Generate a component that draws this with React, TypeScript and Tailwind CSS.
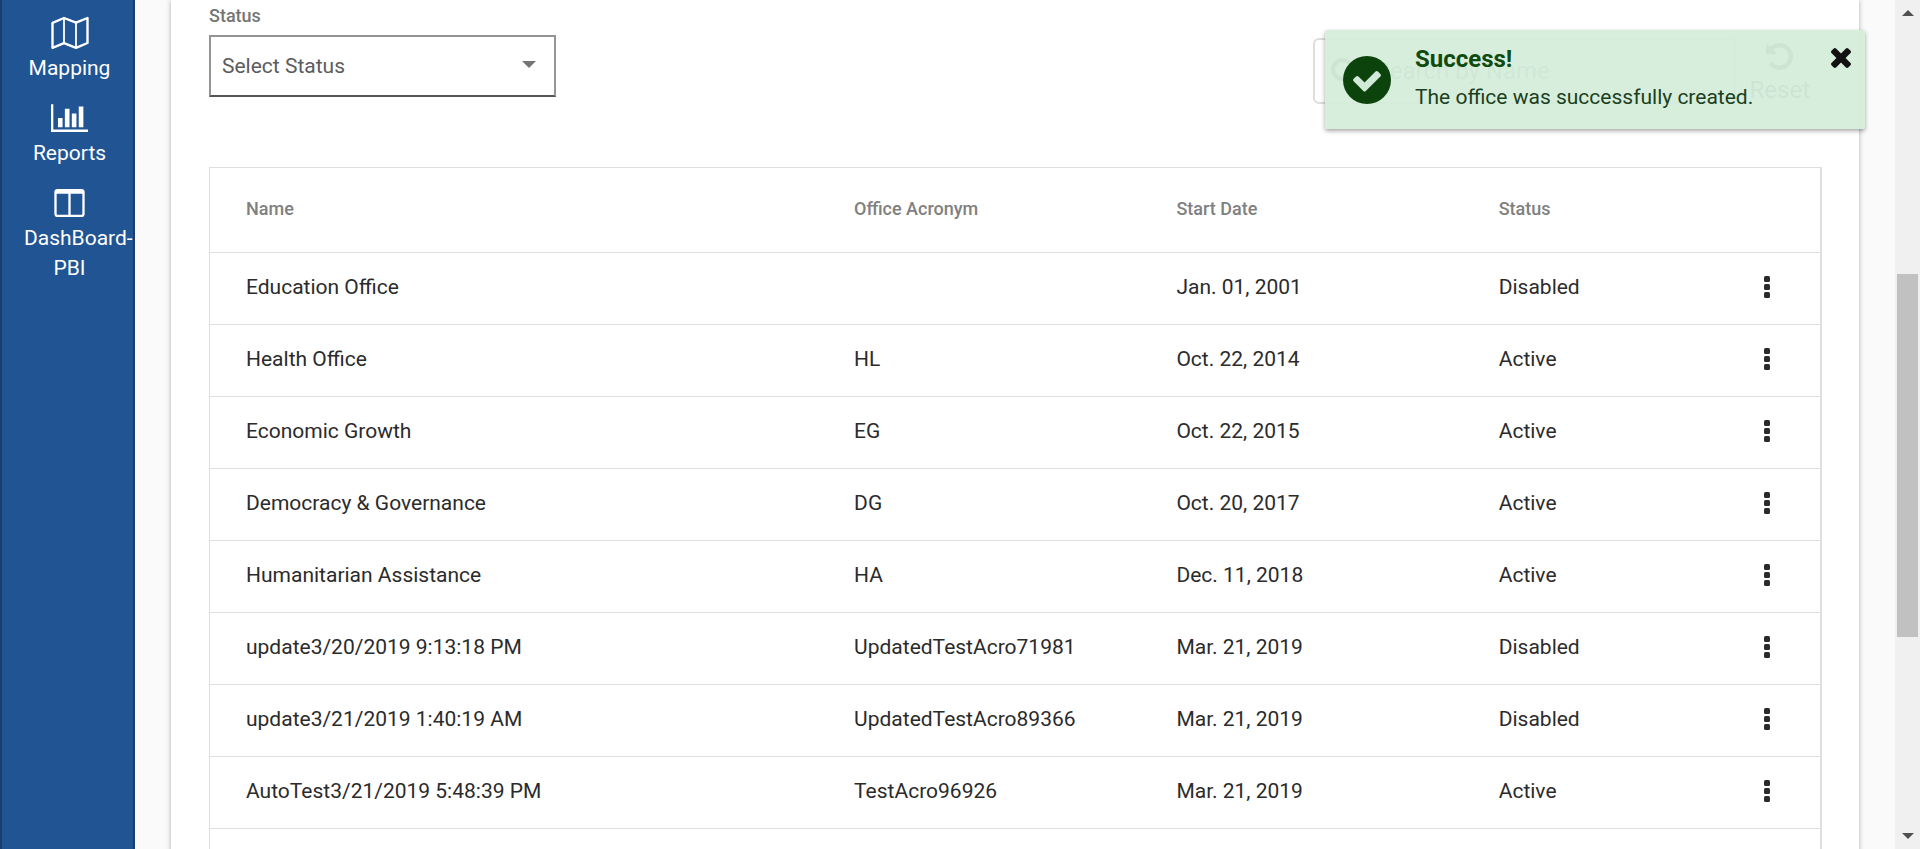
import React from "react";

type Office = { name: string; acronym: string; start: string; status: string };

const offices: Office[] = [
  { name: "Education Office", acronym: "", start: "Jan. 01, 2001", status: "Disabled" },
  { name: "Health Office", acronym: "HL", start: "Oct. 22, 2014", status: "Active" },
  { name: "Economic Growth", acronym: "EG", start: "Oct. 22, 2015", status: "Active" },
  { name: "Democracy & Governance", acronym: "DG", start: "Oct. 20, 2017", status: "Active" },
  { name: "Humanitarian Assistance", acronym: "HA", start: "Dec. 11, 2018", status: "Active" },
  { name: "update3/20/2019 9:13:18 PM", acronym: "UpdatedTestAcro71981", start: "Mar. 21, 2019", status: "Disabled" },
  { name: "update3/21/2019 1:40:19 AM", acronym: "UpdatedTestAcro89366", start: "Mar. 21, 2019", status: "Disabled" },
  { name: "AutoTest3/21/2019 5:48:39 PM", acronym: "TestAcro96926", start: "Mar. 21, 2019", status: "Active" },
];

function MapIcon() {
  return (
    <svg viewBox="0 0 38 34" className="h-[34px] w-[38px]" fill="none" stroke="currentColor" strokeLinejoin="round" aria-hidden="true">
      <path strokeWidth="2.4" d="M1.5 6.8 13 2l12 4.6L36.500 2v25L25 31.800 13 27.200 1.500 31.800z" />
      <path strokeWidth="1.8" d="M13 2v25.200M25 6.600v25.200" />
    </svg>
  );
}

function ChartIcon() {
  return (
    <svg viewBox="0 128 2048 1536" className="h-[28px] w-[37px]" fill="currentColor" aria-hidden="true">
      <path d="M640 896v512h-256v-512zm384-512v1024h-256v-1024zm1024 1152v128h-2048v-1536h128v1408h1920zm-640-896v768h-256v-768zm384-384v1152h-256v-1152z" />
    </svg>
  );
}

function ColumnsIcon() {
  return (
    <svg viewBox="0 128 1664 1536" className="h-[28px] w-[31px]" fill="currentColor" aria-hidden="true">
      <path d="M160 1536h608v-1152h-640v1120q0 13 9.500 22.500t22.500 9.500zm1376-32v-1120h-640v1152h608q13 0 22.500-9.500t9.500-22.500zm128-1216v1216q0 66-47 113t-113 47h-1344q-66 0-113-47t-47-113v-1216q0-66 47-113t113-47h1344q66 0 113 47t47 113z" />
    </svg>
  );
}

function SearchIcon() {
  return (
    <svg viewBox="64 128 1664 1664" className="h-[27px] w-[27px] shrink-0" fill="currentColor" aria-hidden="true">
      <path d="M1216 832q0-185-131.500-316.500t-316.500-131.500-316.500 131.500-131.500 316.500 131.500 316.500 316.500 131.500 316.500-131.500 131.500-316.500zm512 832q0 52-38 90t-90 38q-54 0-90-38l-343-342q-179 124-399 124-143 0-273.500-55.500t-225-150-150-225-55.500-273.500 55.500-273.500 150-225 225-150 273.500-55.500 273.500 55.500 225 150 150 225 55.500 273.500q0 220-124 399l343 343q37 37 37 90z" />
    </svg>
  );
}

function UndoIcon() {
  return (
    <svg viewBox="128 128 1536 1536" className="h-[27px] w-[27px]" fill="currentColor" aria-hidden="true">
      <path d="M1664 896q0 156-61 298t-164 245-245 164-298 61q-172 0-327-72.500t-264-204.500q-7-10-6.500-22.500t8.500-20.500l137-138q10-9 25-9 16 2 23 12 73 95 179 147t225 52q104 0 198.500-40.500t163.500-109.500 109.500-163.500 40.500-198.500-40.500-198.500-109.500-163.500-163.500-109.500-198.500-40.500q-98 0-188 35.500t-160 101.500l137 138q31 30 14 69-17 40-59 40h-448q-26 0-45-19t-19-45v-448q0-42 40-59 39-17 69 14l130 129q107-101 244.500-156.500t284.500-55.500q156 0 298 61t245 164 164 245 61 298z" />
    </svg>
  );
}

function CheckCircleIcon() {
  return (
    <svg viewBox="128 128 1536 1536" className="h-12 w-12 shrink-0" aria-hidden="true">
      <circle cx="896" cy="896" r="768" fill="currentColor" />
      <g transform="translate(896 917) scale(0.86) translate(-896 -937)" fill="#d2ead8">
        <path d="M1412 734q0-28-18-46l-91-90q-19-19-45-19t-45 19l-408 407-226-226q-19-19-45-19t-45 19l-91 90q-18 18-18 46 0 27 18 45l362 362q19 19 45 19 27 0 46-19l543-543q18-18 18-45z" />
      </g>
    </svg>
  );
}

function CloseIcon() {
  return (
    <svg viewBox="302 366 1188 1188" className="h-5 w-5" fill="currentColor" aria-hidden="true">
      <path d="M1490 1322q0 40-28 68l-136 136q-28 28-68 28t-68-28l-294-294-294 294q-28 28-68 28t-68-28l-136-136q-28-28-28-68t28-68l294-294-294-294q-28-28-28-68t28-68l136-136q28-28 68-28t68 28l294 294 294-294q28-28 68-28t68 28l136 136q28 28 28 68t-28 68l-294 294 294 294q28 28 28 68z" />
    </svg>
  );
}

function DotsIcon() {
  return (
    <svg viewBox="0 0 6 22" className="h-[22px] w-[6px]" fill="currentColor" aria-hidden="true">
      <rect width="6" height="6" rx="1.500" />
      <rect y="8" width="6" height="6" rx="1.500" />
      <rect y="16" width="6" height="6" rx="1.500" />
    </svg>
  );
}

function NavItem({ icon, label }: { icon: React.ReactNode; label: string }) {
  return (
    <a href="#" className="flex flex-col gap-[3px]">
      <span className="flex h-[34px] items-center justify-center">{icon}</span>
      <span className="text-center text-[21px] leading-[30px]">{label}</span>
    </a>
  );
}

function Sidebar() {
  return (
    <nav className="flex w-[135px] shrink-0 flex-col gap-[18px] border-x-2 border-[#1a3d6e] bg-[#205493] pt-4 pr-[18px] pl-[22px] text-white">
      <NavItem icon={<MapIcon />} label="Mapping" />
      <NavItem icon={<ChartIcon />} label="Reports" />
      <NavItem icon={<ColumnsIcon />} label="DashBoard-PBI" />
    </nav>
  );
}

function Filters() {
  return (
    <div className="flex items-start justify-between">
      <div className="flex w-[347px] flex-col">
        <label htmlFor="status" className="mb-2 text-lg leading-[22px] font-medium text-[#757575]">
          Status
        </label>
        <div className="relative">
          <select
            id="status"
            className="block h-[62px] w-full appearance-none border-2 border-[#949494] border-b-[#555] bg-white px-[11px] pt-[2px] text-[21px] text-[#5c5c5c]"
          >
            <option>Select Status</option>
          </select>
          <svg viewBox="0 0 14 7" className="pointer-events-none absolute top-[26px] right-5 h-[7px] w-[14px]" fill="#757575" aria-hidden="true">
            <path d="M0 0h14L7 7z" />
          </svg>
        </div>
      </div>
      <div className="flex gap-[14px] pt-[33px] pr-3">
        <label className="flex h-[66px] w-[423px] items-center gap-[18px] rounded-md border-2 border-[#ddd] pl-4 text-[#757575]">
          <SearchIcon />
          <input type="text" aria-label="Search by Name" placeholder="Search by Name" className="w-full min-w-0 text-2xl placeholder:text-[#999]" />
        </label>
        <button type="button" className="flex flex-col items-center gap-1 pt-[5px] text-2xl leading-8 text-[#757575]">
          <UndoIcon />
          Reset
        </button>
      </div>
    </div>
  );
}

function OfficeTable() {
  return (
    <table className="w-full table-fixed border-collapse border border-r-2 border-[#dfdfdf] text-left text-[#2b2b2b]">
      <colgroup>
        <col className="w-[40%]" />
        <col className="w-[20%]" />
        <col className="w-[20%]" />
        <col className="w-[13%]" />
        <col className="w-[7%]" />
      </colgroup>
      <thead>
        <tr className="h-[85px] border-b border-[#dfdfdf] text-lg text-[#808080]">
          <th className="pb-[2px] pl-9 font-medium">Name</th>
          <th className="pb-[2px] font-medium">Office Acronym</th>
          <th className="pb-[2px] font-medium">Start Date</th>
          <th className="pb-[2px] font-medium">Status</th>
          <th aria-label="Actions" />
        </tr>
      </thead>
      <tbody className="text-[21px]">
        {offices.map((o) => (
          <tr key={o.name} className="h-[72px] border-b border-[#dfdfdf]">
            <td className="pb-[2px] pl-9">{o.name}</td>
            <td className="pb-[2px]">{o.acronym}</td>
            <td className="pb-[2px]">{o.start}</td>
            <td className="pb-[2px]">{o.status}</td>
            <td className="pr-[50px] pb-1">
              <button type="button" aria-label={"Actions for " + o.name} className="ml-auto block">
                <DotsIcon />
              </button>
            </td>
          </tr>
        ))}
        <tr className="h-[72px]">
          <td colSpan={5} />
        </tr>
      </tbody>
    </table>
  );
}

function Toast() {
  return (
    <div
      role="alert"
      className="absolute top-[30px] right-[55px] flex h-[99px] w-[540px] items-start rounded-xs bg-[#d4edda]/93 pl-[18px] shadow-[0_2px_4px_rgba(0,0,0,0.35)]"
    >
      <span className="mt-[26px] text-[#0c430c]">
        <CheckCircleIcon />
      </span>
      <div className="ml-6 flex-1 pt-[13px]">
        <p className="text-2xl leading-8 font-bold text-[#0f4a0f]">Success!</p>
        <p className="mt-[6px] text-[21px] leading-8 text-[#1b4020]">The office was successfully created.</p>
      </div>
      <button type="button" aria-label="Close" className="mt-[18px] mr-[14px] text-[#111]">
        <CloseIcon />
      </button>
    </div>
  );
}

function ScrollTrack() {
  return (
    <div className="flex w-[25px] shrink-0 flex-col items-center bg-[#f0f0f0] py-[10px]" aria-hidden="true">
      <svg viewBox="0 0 12 6" className="h-[6px] w-3" fill="#505050">
        <path d="M0 6h12L6 0z" />
      </svg>
      <div className="flex-[258]" />
      <div className="w-[21px] flex-[363] bg-[#c1c1c1]" />
      <div className="flex-[196]" />
      <svg viewBox="0 0 12 6" className="h-[6px] w-3" fill="#505050">
        <path d="M0 0h12L6 6z" />
      </svg>
    </div>
  );
}

export default function App() {
  return (
    <div className="relative flex h-screen overflow-hidden bg-[#fafafa] font-[Roboto,sans-serif]">
      <Sidebar />
      <main className="min-w-0 flex-1 pr-[36px] pl-[36px]">
        <div className="flex min-h-full flex-col gap-[61px] bg-white pr-[37px] pl-[38px] pt-[5px] shadow-[0_0_5px_rgba(0,0,0,0.3)]">
          <Filters />
          <OfficeTable />
        </div>
      </main>
      <ScrollTrack />
      <Toast />
    </div>
  );
}
